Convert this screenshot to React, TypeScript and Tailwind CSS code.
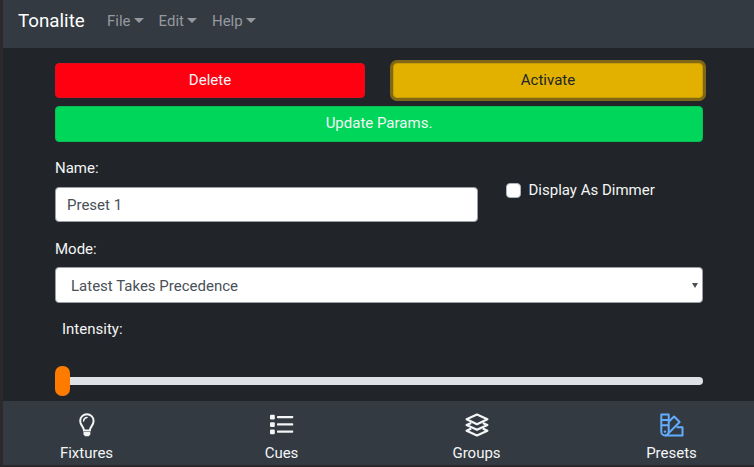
import type { ReactNode } from "react";

function Caret() {
  return <span className="ml-[3px] mb-[2px] inline-block h-0 w-0 border-x-[5px] border-t-[5px] border-x-transparent border-t-[#96999d]" />;
}

function Bulb() {
  return (
    <svg width="16" height="24" viewBox="0 0 16 24" fill="none" stroke="currentColor" strokeWidth="2">
      <path d="M5 17.5C5 14 1.2 12.5 1.2 7.9A6.7 6.7 0 0 1 14.6 7.9C14.6 12.5 10.8 14 10.8 17.5Z" />
      <path d="M4.6 8A3.4 3.4 0 0 1 8 4.6" strokeWidth="1.5" strokeLinecap="round" />
      <path d="M4.5 19H11.3V21.2L9.8 23.2H6L4.5 21.2Z" fill="currentColor" stroke="none" />
    </svg>
  );
}

function List() {
  return (
    <svg width="24" height="24" viewBox="0 0 24 24" fill="currentColor">
      <rect x="0" y="1.7" width="4.8" height="4.8" rx="1" />
      <rect x="0" y="9.2" width="4.8" height="4.8" rx="1" />
      <rect x="0" y="16.4" width="4.8" height="4.8" rx="1" />
      <rect x="7" y="2.9" width="16.2" height="2.4" rx="0.7" />
      <rect x="7" y="10.2" width="16.2" height="2.4" rx="0.7" />
      <rect x="7" y="17.4" width="16.2" height="2.4" rx="0.7" />
    </svg>
  );
}

function Layers() {
  return (
    <svg width="24" height="24" viewBox="0 0 24 24" fill="none" stroke="currentColor" strokeWidth="2.2" strokeLinejoin="round">
      <path d="M1.6 6.3L12 1.5L22.4 6.3L12 11.2Z" />
      <path d="M6.2 9.9L1.6 12L12 16.8L22.4 12L17.8 9.9" />
      <path d="M6.2 15.6L1.6 17.7L12 22.5L22.4 17.7L17.8 15.6" />
    </svg>
  );
}

function Swatches() {
  return (
    <svg width="24" height="24" viewBox="0 0 24 24" fill="none" stroke="currentColor" strokeWidth="2" strokeLinejoin="round">
      <path d="M1.3 1.5H8.7V18.8A3.7 3.7 0 0 1 1.3 18.8Z" />
      <path d="M1.3 7H8.7M1.3 12.3H8.7" />
      <path d="M8.7 8.8L14.1 3.5L19.6 9L7.4 21.4" />
      <path d="M16.5 14.2H22.5V22.4H5" />
      <circle cx="5" cy="18.6" r="1.2" fill="currentColor" stroke="none" />
    </svg>
  );
}

function Tab({ label, children }: { label: string; children: ReactNode }) {
  return (
    <div className="flex w-[195px] shrink-0 flex-col items-center pt-3">
      <div className="flex h-6 items-center">{children}</div>
      <span className="mt-[5px] leading-[23px]">{label}</span>
    </div>
  );
}

export default function App() {
  return (
    <div className="h-[467px] w-[754px] overflow-hidden border-b-2 border-l-[3px] border-b-[#2b2729] border-l-[#2b292a] bg-[#212529] font-[Roboto,sans-serif] text-[15px] leading-[22px] text-[#f4f5f6]">
      <nav className="flex h-12 items-start bg-[#333a42] pt-[10px] pl-[15px]">
        <span className="w-[89px] text-[18.75px] text-white">Tonalite</span>
        {["File", "Edit", "Help"].map((item) => (
          <span key={item} className="mr-[15px] flex items-center text-[#96999d]">
            {item}
            <Caret />
          </span>
        ))}
      </nav>
      <main className="h-[353px] pt-[15px] pr-[51px] pl-[52px]">
        <div className="grid grid-cols-2 gap-7">
          <button className="h-[35px] rounded-[4px] border border-[#e00e1c] bg-[#ff0010] pb-[2px]">Delete</button>
          <button className="h-[35px] rounded-[4px] border border-[#c79e05] bg-[#e2b100] pb-[2px] text-[#212529] ring-[3px] ring-[#806817]">Activate</button>
        </div>
        <button className="mt-2 block h-[35.5px] w-full rounded-[4px] border border-[#0cbd52] bg-[#00d65a] pb-[2px]">Update Params.</button>
        <div className="flex items-start pt-[15.5px]">
          <div className="w-[422.5px]">
            <label className="block">Name:</label>
            <div className="mt-[7.5px] flex h-[35.5px] items-center rounded-[4px] border border-[#9c9fa5] bg-white pt-px pl-[11px] text-[#495057]">Preset 1</div>
          </div>
          <label className="mt-[22px] ml-7 flex h-[22px] items-center">
            <span className="mr-2 block h-[15px] w-[15px] rounded-[4px] border border-[#adb5bd] bg-white" />
            Display As Dimmer
          </label>
        </div>
        <label className="mt-4 block">Mode:</label>
        <div className="mt-[7px] flex h-9 items-center justify-between rounded-[4px] border border-[#9c9fa5] bg-white pt-px pr-1 pl-[15px] text-[#495057]">
          Latest Takes Precedence
          <span className="h-0 w-0 border-x-[3px] border-t-[5px] border-x-transparent border-t-[#495057]" />
        </div>
        <label className="mt-[15px] block pl-[7px]">Intensity:</label>
        <div className="mt-[26px] flex h-[30px] items-center">
          <div className="z-10 h-[30px] w-[15px] rounded-[7px] bg-[#ff7b00]" />
          <div className="-ml-2 h-2 flex-1 rounded-r-[4px] bg-[#dee2e6]" />
        </div>
      </main>
      <footer className="flex h-16 bg-[#333a42]">
        <div className="-ml-[14px] flex">
          <Tab label="Fixtures"><Bulb /></Tab>
          <Tab label="Cues"><List /></Tab>
          <Tab label="Groups"><Layers /></Tab>
          <Tab label="Presets"><span className="text-[#63adff]"><Swatches /></span></Tab>
        </div>
      </footer>
    </div>
  );
}
